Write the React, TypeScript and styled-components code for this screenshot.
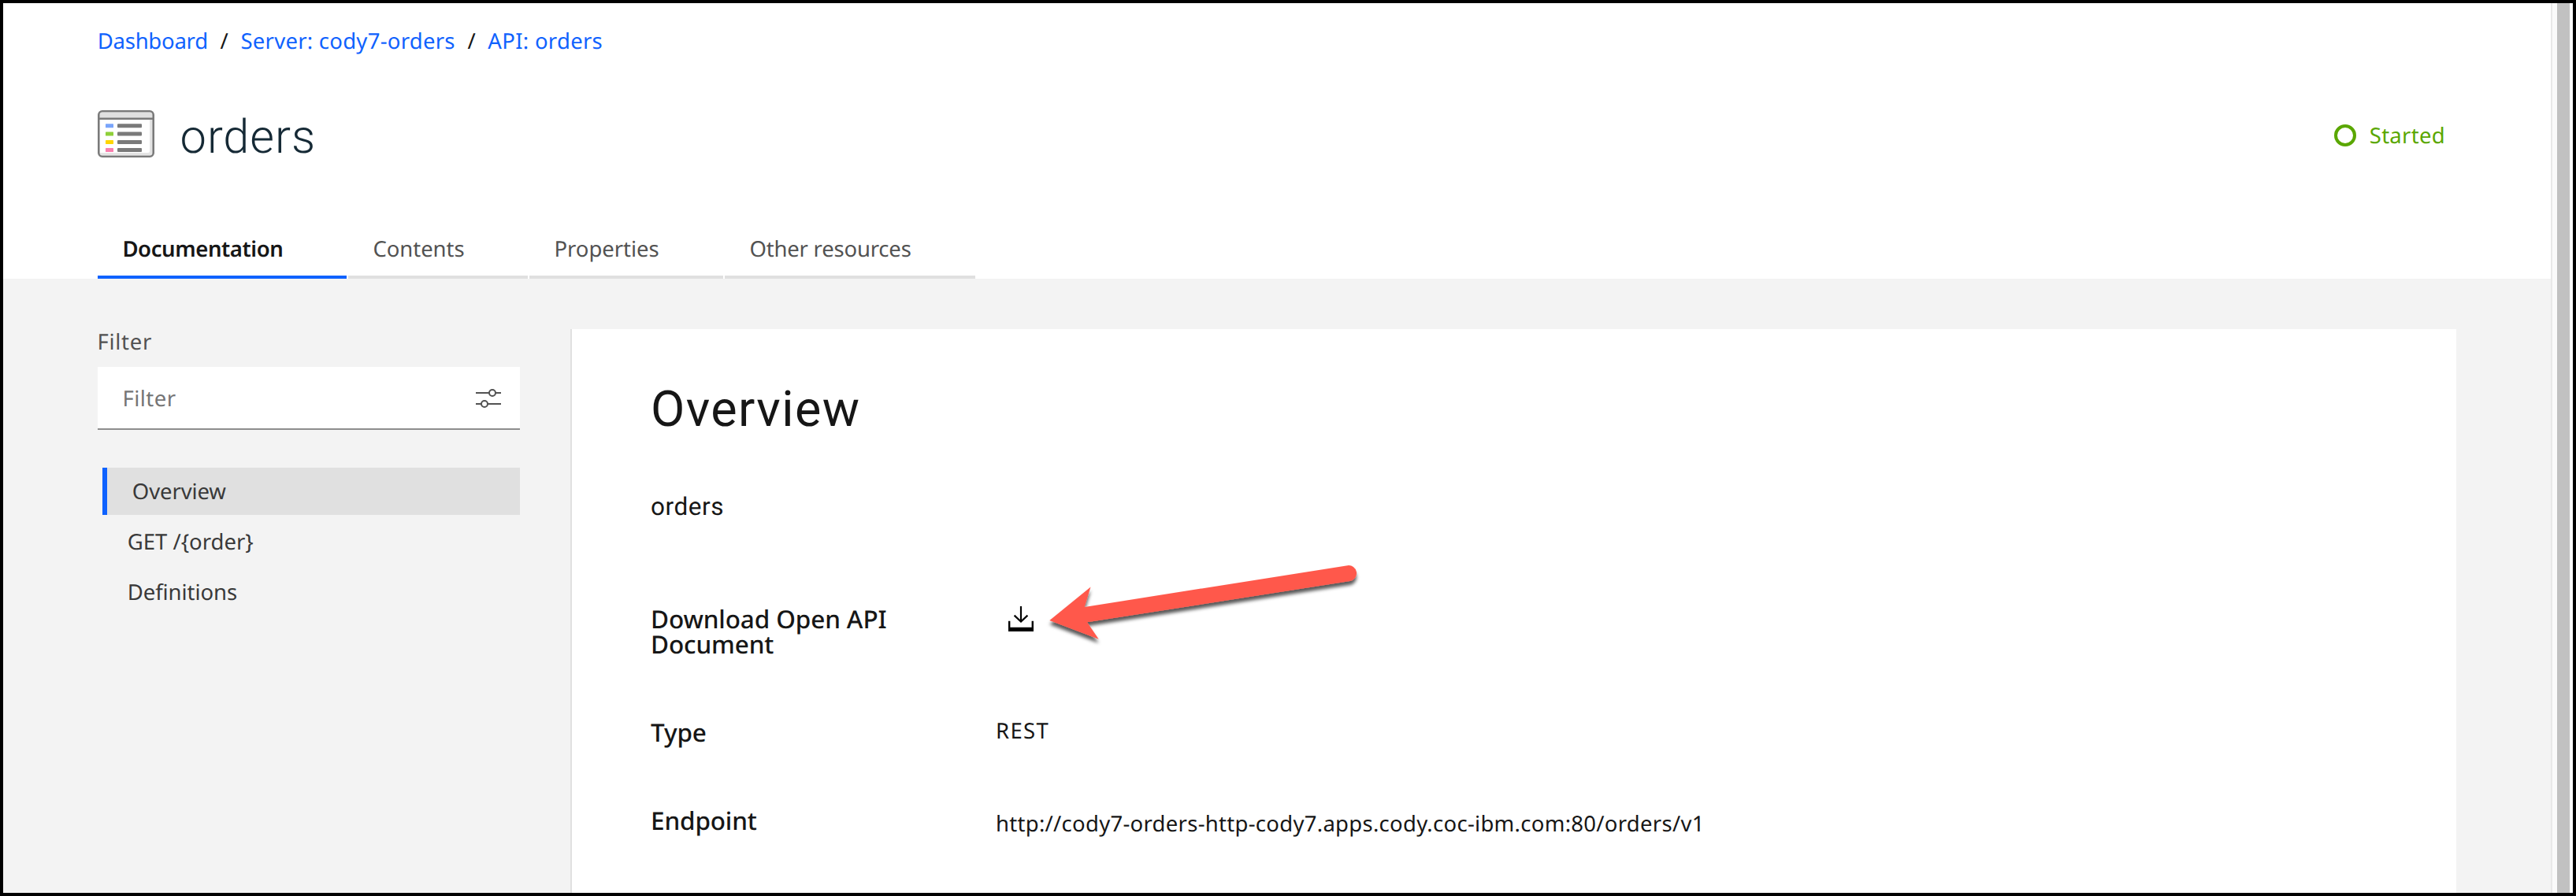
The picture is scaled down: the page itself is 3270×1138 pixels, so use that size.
import React from "react";
import styled, { createGlobalStyle } from "styled-components";

const GlobalStyle = createGlobalStyle`
  *, *::before, *::after { box-sizing: border-box; }
  body {
    margin: 0;
    background: #fff;
    color: #161616;
    font-family: "Noto Sans", "Liberation Sans", sans-serif;
    font-size: 27.5px;
    line-height: 37px;
    text-rendering: geometricPrecision;
  }
  h1, h2, p, dl, dt, dd, ul { margin: 0; padding: 0; }
  svg { display: block; flex: none; }
`;

const displayFont = `Roboto, "Liberation Sans", sans-serif`;

const Frame = styled.div`
  display: flex;
  width: 3270px;
  height: 1138px;
  border: 4px solid #000;
  overflow: hidden;
`;

const Page = styled.div`
  flex: 1;
  display: flex;
  flex-direction: column;
`;

const ScrollTrack = styled.div`
  width: 28px;
  padding: 0 4px 0 6px;
  border-left: 2px solid #e8e8e8;
  background: #fafafa;
`;

const ScrollThumb = styled.div`
  height: 100%;
  background: #c1c1c1;
`;

const Header = styled.header`
  display: flex;
  flex-direction: column;
  height: 350px;
  padding: 30px 134px 0 120px;
`;

const Breadcrumb = styled.nav`
  display: flex;
  gap: 15.7px;
  margin-left: -0.3px;
`;

const Tracked = styled.span<{ $track: number }>`
  letter-spacing: ${(p) => p.$track}px;
  white-space: nowrap;
`;

const CrumbLink = styled(Tracked).attrs({ as: "a" })`
  color: #0f62fe;
`;

const TitleRow = styled.div`
  display: flex;
  align-items: flex-start;
  height: 70px;
  margin-top: 68px;
`;

const TitleIcon = styled.svg`
  margin-top: 1px;
`;

const Title = styled.h1`
  margin-left: 32.6px;
  color: #152935;
  font-family: ${displayFont};
  font-size: 59.5px;
  font-weight: 300;
  line-height: 70px;
  letter-spacing: 0.95px;
`;

const Status = styled.div`
  display: flex;
  align-items: center;
  gap: 17px;
  margin: 15px 0 0 auto;
  color: #5aa700;
`;

const StatusRing = styled.span`
  width: 28px;
  height: 28px;
  margin-bottom: 1px;
  border: 4px solid currentColor;
  border-radius: 50%;
`;

const Tabs = styled.div`
  display: flex;
  gap: 2px;
  margin-top: auto;
`;

const Tab = styled.div<{ $width: number; $active?: boolean }>`
  width: ${(p) => p.$width}px;
  height: 56px;
  padding-left: 31.4px;
  border-bottom: 4px solid ${(p) => (p.$active ? "#0f62fe" : "#e0e0e0")};
  color: ${(p) => (p.$active ? "#161616" : "#525252")};
  font-weight: ${(p) => (p.$active ? 600 : 400)};
`;

const Body = styled.main`
  flex: 1;
  display: flex;
  padding: 0 120px;
  background: #f3f3f3;
`;

const Sidebar = styled.aside`
  width: 536px;
  padding-top: 62px;
`;

const FilterLabel = styled.div`
  margin-left: -0.5px;
  color: #525252;
`;

const FilterBox = styled.div`
  display: flex;
  justify-content: space-between;
  height: 80px;
  margin-top: 13px;
  padding: 22px 24px 0 31.5px;
  border-bottom: 2px solid #8d8d8d;
  background: #fff;
  color: #757575;
`;

const AdjustIcon = styled.svg`
  margin-top: 4px;
`;

const NavList = styled.ul`
  display: flex;
  flex-direction: column;
  gap: 4px;
  margin: 48px 0 0 6px;
  list-style: none;
`;

const NavItem = styled.li<{ $active?: boolean }>`
  height: 60px;
  padding: 12px 0 0 31.8px;
  border-left: ${(p) => (p.$active ? "6px solid #0f62fe" : "0")};
  background: ${(p) => (p.$active ? "#e0e0e0" : "transparent")};
  color: #393939;
`;

const Panel = styled.section`
  flex: 1;
  margin: 64px 0 0 64px;
  padding: 66px 0 0 100px;
  border-left: 2px solid #e0e0e0;
  background: #fff;
`;

const PanelTitle = styled.h2`
  font-family: ${displayFont};
  font-size: 63px;
  font-weight: 400;
  line-height: 73px;
  letter-spacing: 1.38px;
`;

const Description = styled.p`
  margin-top: 68px;
  font-family: ${displayFont};
  font-size: 31.5px;
  line-height: 37px;
  letter-spacing: 0.55px;
`;

const Details = styled.dl`
  margin-top: 108px;
`;

const DetailRow = styled.div<{ $height: number; $gap: number }>`
  display: grid;
  grid-template-columns: 438px 1fr;
  height: ${(p) => p.$height}px;
  margin-bottom: ${(p) => p.$gap}px;
`;

const Term = styled.dt<{ $top: number; $track: number }>`
  width: 340px;
  margin-top: ${(p) => p.$top}px;
  font-size: 31.5px;
  font-weight: 500;
  line-height: 32px;
  letter-spacing: ${(p) => p.$track}px;
`;

const Value = styled.dd`
  position: relative;
`;

const DownloadIcon = styled.svg`
  margin-left: 16px;
`;

const Callout = styled.svg`
  position: absolute;
  left: 56px;
  top: -70px;
`;

const menuRows = [
  { y: 17.3, color: "#7aa5fb" },
  { y: 27.6, color: "#8fd03a" },
  { y: 37.9, color: "#ffd500" },
  { y: 48, color: "#f97fae" },
];

const tabs = [
  { label: "Documentation", width: 316, track: -0.4, active: true },
  { label: "Contents", width: 228, track: -0.05 },
  { label: "Properties", width: 246, track: -0.03 },
  { label: "Other resources", width: 318, track: -0.2 },
];

const navItems = [
  { label: "Overview", track: -0.12, active: true },
  { label: "GET /{order}", track: -0.02 },
  { label: "Definitions", track: -0.08 },
];

export default function App() {
  return (
    <>
      <GlobalStyle />
      <Frame>
        <Page>
          <Header>
            <Breadcrumb>
              <CrumbLink $track={-0.25}>Dashboard</CrumbLink>
              <span>/</span>
              <CrumbLink $track={0.26}>Server: cody7-orders</CrumbLink>
              <span>/</span>
              <CrumbLink $track={0.3}>API: orders</CrumbLink>
            </Breadcrumb>
            <TitleRow>
              <TitleIcon width="72" height="60" viewBox="0 0 72 60">
                <rect x="1.3" y="1.3" width="69.4" height="57.4" rx="4.5" fill="#fff" />
                <path d="M2.5 3h67v7h-67z" fill="#e0e0e0" />
                <path d="M66 12h3.5v45h-67v-3H64a2 2 0 0 0 2-2z" fill="#e4e4e4" />
                <path d="M2 10.7h68" stroke="#7a7a7a" strokeWidth="2.5" />
                <rect x="1.3" y="1.3" width="69.4" height="57.4" rx="4.5" fill="none" stroke="#7a7a7a" strokeWidth="2.6" />
                {menuRows.map((row) => (
                  <g key={row.y}>
                    <rect x="10" y={row.y} width="10" height="5" rx="0.6" fill={row.color} />
                    <rect x="25" y={row.y} width="31" height="5" rx="1" fill="#7a7a7a" />
                  </g>
                ))}
              </TitleIcon>
              <Title>orders</Title>
              <Status>
                <StatusRing />
                <Tracked $track={0.3}>Started</Tracked>
              </Status>
            </TitleRow>
            <Tabs>
              {tabs.map((tab) => (
                <Tab key={tab.label} $width={tab.width} $active={tab.active}>
                  <Tracked $track={tab.track}>{tab.label}</Tracked>
                </Tab>
              ))}
            </Tabs>
          </Header>
          <Body>
            <Sidebar>
              <FilterLabel>
                <Tracked $track={0.7}>Filter</Tracked>
              </FilterLabel>
              <FilterBox>
                <Tracked $track={0.45}>Filter</Tracked>
                <AdjustIcon width="32" height="28" viewBox="0 0 32 28" fill="none" stroke="#525252" strokeWidth="2">
                  <path d="M0 7h17M25 7h7M0 21h7M15 21h17" />
                  <circle cx="21" cy="7" r="4" />
                  <circle cx="11" cy="21" r="4" />
                </AdjustIcon>
              </FilterBox>
              <NavList>
                {navItems.map((item) => (
                  <NavItem key={item.label} $active={item.active}>
                    <Tracked $track={item.track}>{item.label}</Tracked>
                  </NavItem>
                ))}
              </NavList>
            </Sidebar>
            <Panel>
              <PanelTitle>Overview</PanelTitle>
              <Description>orders</Description>
              <Details>
                <DetailRow $height={66} $gap={74}>
                  <Term $top={1} $track={-0.12}>
                    Download Open API Document
                  </Term>
                  <Value>
                    <DownloadIcon width="32" height="32" viewBox="0 0 32 32">
                      <path d="M16 0v19.5M7.6 11.6l8.4 8 8.4-8" fill="none" stroke="#000" strokeWidth="2.2" />
                      <path d="M0 18.7h2.4v8h27.2v-8H32V32H0z" />
                    </DownloadIcon>
                    <Callout width="420" height="130" viewBox="1320 700 420 130">
                      <defs>
                        <filter id="calloutShadow" x="-5%" y="-10%" width="110%" height="135%">
                          <feDropShadow dx="0" dy="5" stdDeviation="2.2" floodColor="#000" floodOpacity="0.65" />
                        </filter>
                      </defs>
                      <path
                        filter="url(#calloutShadow)"
                        fill="#ff594c"
                        d="M1332.3 788L1384.5 745.5 1376.7 771 1710.5 718.2A10 10 0 0 1 1713.6 738L1380 790.3 1394.7 811.8z"
                      />
                    </Callout>
                  </Value>
                </DetailRow>
                <DetailRow $height={38} $gap={80}>
                  <Term $top={5} $track={-0.16}>Type</Term>
                  <Value>
                    <Tracked $track={1.3}>REST</Tracked>
                  </Value>
                </DetailRow>
                <DetailRow $height={38} $gap={0}>
                  <Term $top={-1} $track={-0.15}>Endpoint</Term>
                  <Value>
                    <Tracked $track={0.28}>http://cody7-orders-http-cody7.apps.cody.coc-ibm.com:80/orders/v1</Tracked>
                  </Value>
                </DetailRow>
              </Details>
            </Panel>
          </Body>
        </Page>
        <ScrollTrack>
          <ScrollThumb />
        </ScrollTrack>
      </Frame>
    </>
  );
}
